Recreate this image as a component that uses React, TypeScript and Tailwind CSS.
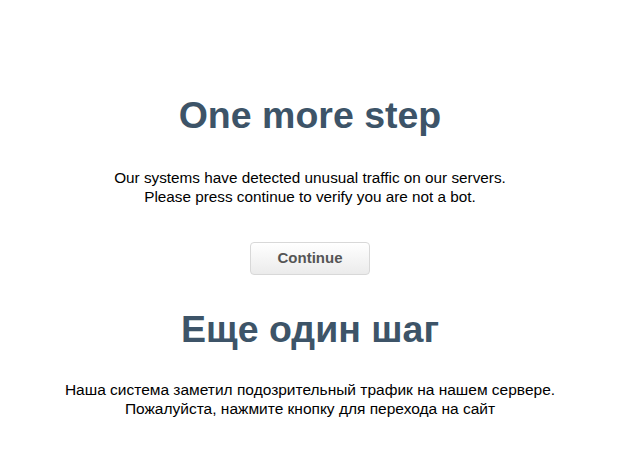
export default function App() {
  return (
    <div className="min-h-[473px] w-full bg-white" style={{ fontFamily: '"Liberation Sans", Arial, sans-serif' }}>
      <div className="w-[620px] pt-[93px] text-center">
        <h1 className="text-[37.5px] leading-[44px] font-bold text-[#3d5468]">One more step</h1>
        <p className="mt-[31px] text-[15.3px] leading-[19px] text-black">
          Our systems have detected unusual traffic on our servers.
          <br />
          Please press continue to verify you are not a bot.
        </p>
        <div className="mt-[36px] flex justify-center">
          <button className="h-[33px] w-[120px] rounded-[4px] border border-[#d8d8d8] bg-gradient-to-b from-white to-[#ebebeb] text-[15px] font-bold text-[#555]">
            Continue
          </button>
        </div>
        <h1 className="mt-[32px] text-[37.5px] leading-[44px] font-bold text-[#3d5468]">Еще один шаг</h1>
        <p className="mt-[29px] text-[15.5px] leading-[19px] text-black">
          Наша система заметил подозрительный трафик на нашем сервере.
          <br />
          Пожалуйста, нажмите кнопку для перехода на сайт
        </p>
      </div>
    </div>
  );
}
